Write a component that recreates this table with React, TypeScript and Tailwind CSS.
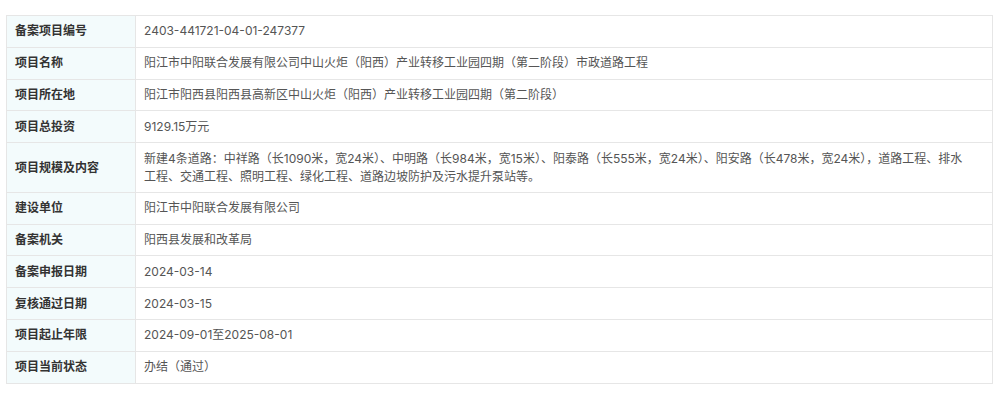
import React from "react";

const rows: { label: string; value: React.ReactNode }[] = [
  { label: "备案项目编号", value: "2403-441721-04-01-247377" },
  { label: "项目名称", value: "阳江市中阳联合发展有限公司中山火炬（阳西）产业转移工业园四期（第二阶段）市政道路工程" },
  { label: "项目所在地", value: "阳江市阳西县阳西县高新区中山火炬（阳西）产业转移工业园四期（第二阶段）" },
  { label: "项目总投资", value: "9129.15万元" },
  {
    label: "项目规模及内容",
    value: (
      <>
        <span className="whitespace-nowrap">新建4条道路：中祥路（长1090米，宽24米）、中明路（长984米，宽15米）、阳泰路（长555米，宽24米）、阳安路（长478米，宽24米），道路工程、排水</span>
        <br />
        工程、交通工程、照明工程、绿化工程、道路边坡防护及污水提升泵站等。
      </>
    ),
  },
  { label: "建设单位", value: "阳江市中阳联合发展有限公司" },
  { label: "备案机关", value: "阳西县发展和改革局" },
  { label: "备案申报日期", value: "2024-03-14" },
  { label: "复核通过日期", value: "2024-03-15" },
  { label: "项目起止年限", value: "2024-09-01至2025-08-01" },
  { label: "项目当前状态", value: "办结（通过）" },
];

export default function App() {
  return (
    <div className="w-[1000px] h-[403px] bg-white pt-[15px] pl-[6px] overflow-hidden font-['Inter','Noto_Sans_CJK_SC',sans-serif]">
      <table className="w-[987px] border-collapse text-[12px] leading-[18px]">
        <tbody>
          {rows.map((r) => (
            <tr key={r.label}>
              <td className="w-[129px] border border-[#e6e6e6] bg-[#f3fbfc] px-[8px] py-[6.4px] font-bold text-[#333] align-middle">
                {r.label}
              </td>
              <td className="border border-[#e6e6e6] px-[8px] py-[6.4px] text-[#555] align-middle">
                {r.value}
              </td>
            </tr>
          ))}
        </tbody>
      </table>
    </div>
  );
}
